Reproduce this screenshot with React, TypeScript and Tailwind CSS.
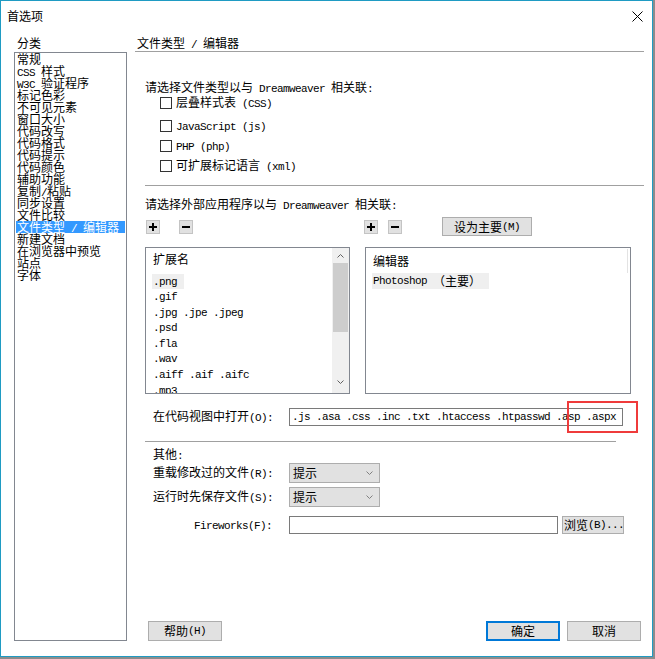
import React from "react";

// split text into CJK / ASCII runs so latin gets the half-width mono look
function Tx({ s }: { s: string }) {
  const parts = s.split(/([\x20-\x7e]+)/).filter(Boolean);
  return (
    <>
      {parts.map((p, i) =>
        /^[\x20-\x7e]+$/.test(p) ? (
          <span
            key={i}
            className="font-['Liberation_Mono',monospace] text-[11px] tracking-[-0.6px] whitespace-pre"
          >
            {p}
          </span>
        ) : (
          <span key={i}>{p}</span>
        )
      )}
    </>
  );
}

function Chev({ up = false, color = "#606060" }: { up?: boolean; color?: string }) {
  return (
    <svg width="7" height="4" viewBox="0 0 7 4" className={up ? "rotate-180" : ""}>
      <polyline points="0.5,0.5 3.5,3.5 6.5,0.5" fill="none" stroke={color} strokeWidth="1" />
    </svg>
  );
}

function PM({ plus }: { plus?: boolean }) {
  return (
    <div className="w-[14px] h-[14px] bg-[#e1e1e1] border border-[#c4c4c4] flex items-center justify-center">
      <svg width="8" height="8" viewBox="0 0 8 8">
        {plus && <rect x="3" y="0" width="2" height="8" fill="#000" />}
        <rect x="0" y="3" width="8" height="2" fill="#000" />
      </svg>
    </div>
  );
}

function Check({ label }: { label: string }) {
  return (
    <div className="h-[20px] flex items-center pl-[15px]">
      <span className="w-[12px] h-[12px] border border-[#333333] bg-white" />
      <span className="ml-[4px] whitespace-nowrap">
        <Tx s={label} />
      </span>
    </div>
  );
}

function Select() {
  return (
    <div className="w-[91px] h-[20px] bg-[#e1e1e1] border border-[#adadad] flex items-center justify-between pl-[3px] pr-[6px]">
      <span>提示</span>
      <Chev color="#808080" />
    </div>
  );
}

const cats = [
  "常规",
  "CSS 样式",
  "W3C 验证程序",
  "标记色彩",
  "不可见元素",
  "窗口大小",
  "代码改写",
  "代码格式",
  "代码提示",
  "代码颜色",
  "辅助功能",
  "复制/粘贴",
  "同步设置",
  "文件比较",
  "文件类型 / 编辑器",
  "新建文档",
  "在浏览器中预览",
  "站点",
  "字体",
];

const exts = [".png", ".gif", ".jpg .jpe .jpeg", ".psd", ".fla", ".wav", ".aiff .aif .aifc", ".mp3"];

export default function App() {
  return (
    <div className="w-[655px] h-[659px] bg-[#8c8c8c] font-['Noto_Sans_CJK_SC',sans-serif] text-[12px] leading-[12px] text-black">
      <div className="w-[653px] h-[657px] border border-[#1f9bc3] bg-white flex flex-col">
        {/* title bar */}
        <div className="h-[30px] flex items-center justify-between pl-[6px] pr-[9px]">
          <span>首选项</span>
          <svg width="11" height="11" viewBox="0 0 11 11">
            <path d="M0.5 0.5 L10.5 10.5 M10.5 0.5 L0.5 10.5" stroke="#000" strokeWidth="1" />
          </svg>
        </div>

        <div className="flex-1 flex pl-[13px] pr-[8px] pb-[15px]">
          {/* categories */}
          <div className="w-[113px] flex flex-col pt-[6px]">
            <div className="pl-[3px] h-[12px]">分类</div>
            <div className="mt-[3px] flex-1 border border-[#828790] px-[1px]">
              {cats.map((c, i) => (
                <div
                  key={c}
                  className={`h-[12px] leading-[12px] pl-[1px] whitespace-nowrap overflow-hidden ${
                    i === 14 ? "bg-[#3399ff] text-white" : ""
                  }`}
                >
                  <Tx s={c} />
                </div>
              ))}
            </div>
          </div>

          {/* page */}
          <div className="ml-[8px] flex-1 flex flex-col pt-[6px]">
            <div className="h-[15px] pl-[2px] border-b border-[#a0a0a0]">
              <Tx s="文件类型 / 编辑器" />
            </div>

            <div className="flex-1 flex flex-col pl-[10px]">
              <div className="mt-[29px] h-[12px] whitespace-nowrap">
                <Tx s="请选择文件类型以与 Dreamweaver 相关联:" />
              </div>
              <Check label="层叠样式表 (CSS)" />
              <div className="mt-[3px]">
                <Check label="JavaScript (js)" />
              </div>
              <Check label="PHP (php)" />
              <Check label="可扩展标记语言 (xml)" />

              <div className="mt-[9px] border-t border-[#a0a0a0]" />

              <div className="mt-[12px] h-[12px] whitespace-nowrap">
                <Tx s="请选择外部应用程序以与 Dreamweaver 相关联:" />
              </div>

              <div className="mt-[7px] h-[19px] flex items-center">
                <div className="ml-[1px]">
                  <PM plus />
                </div>
                <div className="ml-[19px]">
                  <PM />
                </div>
                <div className="ml-[171px]">
                  <PM plus />
                </div>
                <div className="ml-[10px]">
                  <PM />
                </div>
                <div className="ml-[40px] w-[90px] h-[19px] bg-[#e1e1e1] border border-[#adadad] flex items-center justify-center whitespace-nowrap">
                  <Tx s="设为主要(M)" />
                </div>
              </div>

              <div className="mt-[11px] flex">
                {/* extensions */}
                <div className="w-[205px] h-[147px] border border-[#828790] flex">
                  <div className="flex-1 overflow-hidden pl-[6px] pt-[4px]">
                    <div className="h-[14px] leading-[14px] pl-[1px]">扩展名</div>
                    <div className="mt-[8px]">
                      {exts.map((e, i) => (
                        <div key={e} className="h-[15.6px] flex">
                          <span
                            className={`h-[15px] flex items-center pl-[1px] pr-[7px] whitespace-nowrap ${
                              i === 0 ? "bg-[#efefef]" : ""
                            }`}
                          >
                            <Tx s={e} />
                          </span>
                        </div>
                      ))}
                    </div>
                  </div>
                  <div className="w-[17px] bg-[#f0f0f0] flex flex-col items-center">
                    <div className="h-[15px] flex items-center justify-center">
                      <Chev up />
                    </div>
                    <div className="w-[15px] h-[69px] bg-[#cdcdcd]" />
                    <div className="flex-1" />
                    <div className="h-[22px] flex items-center justify-center">
                      <Chev />
                    </div>
                  </div>
                </div>

                {/* editors */}
                <div className="ml-[15px] w-[266px] h-[147px] border border-[#828790] flex">
                  <div className="flex-1 pl-[6px] pt-[6px]">
                    <div className="h-[14px] leading-[14px] pl-[1px]">编辑器</div>
                    <div className="mt-[5px] flex">
                      <span className="h-[16px] flex items-center bg-[#efefef] pl-[1px] pr-[8px] whitespace-nowrap">
                        <Tx s="Photoshop （主要）" />
                      </span>
                    </div>
                  </div>
                  <div className="w-[1px] h-[24px] mt-[1px] mr-[2px] bg-[#e3e3e3]" />
                </div>
              </div>

              <div className="relative mt-[14px] h-[18px] flex items-center pl-[8px]">
                <span className="w-[136px] whitespace-nowrap">
                  <Tx s="在代码视图中打开(O):" />
                </span>
                <div className="w-[334px] h-[18px] border border-[#7a7a7a] flex items-center pl-[2px] whitespace-nowrap overflow-hidden">
                  <Tx s=".js .asa .css .inc .txt .htaccess .htpasswd .asp .aspx" />
                </div>
                <div className="absolute left-[422px] top-[-7px] w-[71px] h-[32px] border-2 border-[#ef3b3b]" />
              </div>

              <div className="mt-[15px] w-[471px] border-t border-[#a0a0a0]" />

              <div className="mt-[6px] h-[12px] pl-[8px]">
                <Tx s="其他:" />
              </div>
              <div className="mt-[3px] flex items-center pl-[8px]">
                <span className="w-[136px] whitespace-nowrap">
                  <Tx s="重载修改过的文件(R):" />
                </span>
                <Select />
              </div>
              <div className="mt-[4px] flex items-center pl-[8px]">
                <span className="w-[136px] whitespace-nowrap">
                  <Tx s="运行时先保存文件(S):" />
                </span>
                <Select />
              </div>
              <div className="mt-[9px] flex items-center pl-[8px]">
                <span className="w-[136px] text-right pr-[17px] whitespace-nowrap">
                  <Tx s="Fireworks(F):" />
                </span>
                <div className="w-[269px] h-[18px] border border-[#7a7a7a]" />
                <div className="ml-[4px] w-[62px] h-[18px] bg-[#e1e1e1] border border-[#adadad] flex items-center pl-[1px] whitespace-nowrap overflow-hidden">
                  <Tx s="浏览(B)..." />
                </div>
              </div>

              <div className="mt-auto flex items-center pr-[3px]">
                <div className="ml-[3px] w-[74px] h-[20px] bg-[#e1e1e1] border border-[#adadad] flex items-center justify-center whitespace-nowrap">
                  <Tx s="帮助(H)" />
                </div>
                <div className="ml-auto w-[74px] h-[20px] bg-[#e1e1e1] border-2 border-[#0078d7] flex items-center justify-center">
                  确定
                </div>
                <div className="ml-[7px] w-[74px] h-[20px] bg-[#e1e1e1] border border-[#adadad] flex items-center justify-center">
                  取消
                </div>
              </div>
            </div>
          </div>
        </div>
      </div>
    </div>
  );
}
